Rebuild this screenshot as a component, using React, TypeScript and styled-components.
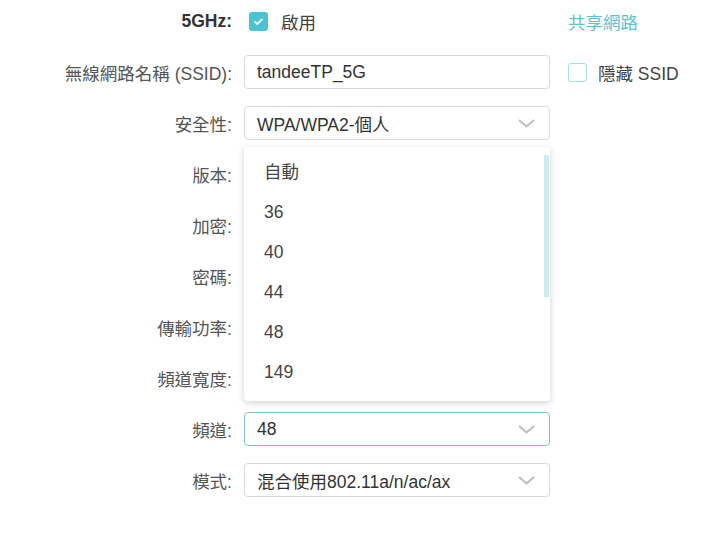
import React from "react";
import styled, { createGlobalStyle } from "styled-components";

const Global = createGlobalStyle`
  html, body { margin: 0; padding: 0; background: #fff; }
  body { font-family: "Liberation Sans", "Noto Sans CJK TC", sans-serif; font-size: 17.5px; color: #333; }
`;

const Page = styled.div`
  position: relative;
  display: flex;
  flex-direction: column;
  gap: 17px;
  padding-top: 4px;
  width: 724px;
  height: 529px;
`;

const Row = styled.div`
  display: flex;
  align-items: center;
  height: 34px;
  gap: 12px;
`;

const Label = styled.div<{ $bold?: boolean }>`
  width: 232px;
  text-align: right;
  color: ${(p) => (p.$bold ? "#333" : "#555")};
  font-weight: ${(p) => (p.$bold ? 700 : 400)};
  white-space: nowrap;
`;

const Field = styled.div`
  position: relative;
  width: 306px;
  height: 34px;
  display: flex;
  align-items: center;
`;

const Box = styled.div<{ $focus?: boolean }>`
  box-sizing: border-box;
  width: 100%;
  height: 100%;
  border: 1px solid ${(p) => (p.$focus ? "#80c6cd" : "#d9d9d9")};
  border-radius: 4px;
  display: flex;
  align-items: center;
  padding: 0 14px 0 12px;
  color: #333;
  background: #fff;
`;

const BoxText = styled.span`
  flex: 1;
`;

const Extra = styled.div`
  margin-left: 6px;
  display: flex;
  align-items: center;
  gap: 11px;
  color: #444;
`;

const Link = styled.span`
  color: #5cc6d0;
  align-self: flex-start;
  margin-top: 1px;
`;

const Check = styled.span<{ $on?: boolean }>`
  box-sizing: border-box;
  width: 19px;
  height: 19px;
  border-radius: 3px;
  border: ${(p) => (p.$on ? "none" : "1.5px solid #a8dde2")};
  background: ${(p) => (p.$on ? "#4ac4d0" : "#fff")};
  display: inline-flex;
  align-items: center;
  justify-content: center;
`;

const CheckLine = styled.label`
  display: flex;
  align-items: center;
  gap: 13px;
  margin-left: 5px;
  color: #444;
`;

const Menu = styled.div`
  position: absolute;
  left: 244px;
  top: 147px;
  width: 306px;
  height: 254px;
  box-sizing: border-box;
  background: #fff;
  border-radius: 4px;
  box-shadow: 0 2px 7px rgba(0, 0, 0, 0.18);
  padding: 5px 0;
  overflow: hidden;
`;

const Thumb = styled.div`
  position: absolute;
  right: 1px;
  top: 8px;
  width: 5px;
  height: 142px;
  background: #c9eef1;
`;

const Item = styled.div`
  height: 40px;
  line-height: 40px;
  padding-left: 20px;
  color: #444;
`;

const Chevron = () => (
  <svg width="17" height="9" viewBox="0 0 17 9">
    <path d="M1 1 L8.5 7.5 L16 1" fill="none" stroke="#bdbdbd" strokeWidth="2" />
  </svg>
);

const Tick = () => (
  <svg width="11" height="9" viewBox="0 0 11 9">
    <path d="M1.5 4.5 L4.3 7 L9.5 1.8" fill="none" stroke="#fff" strokeWidth="1.8" />
  </svg>
);

const Select = ({ value, focus }: { value: string; focus?: boolean }) => (
  <Box $focus={focus}>
    <BoxText>{value}</BoxText>
    <Chevron />
  </Box>
);

const items = ["自動", "36", "40", "44", "48", "149"];

export default function App() {
  return (
    <>
      <Global />
      <Page>
        <Row>
          <Label $bold>5GHz:</Label>
          <Field>
            <CheckLine>
              <Check $on>
                <Tick />
              </Check>
              啟用
            </CheckLine>
          </Field>
          <Extra>
            <Link>共享網路</Link>
          </Extra>
        </Row>
        <Row>
          <Label>無線網路名稱 (SSID):</Label>
          <Field>
            <Box>
              <BoxText>tandeeTP_5G</BoxText>
            </Box>
          </Field>
          <Extra>
            <Check />
            隱藏 SSID
          </Extra>
        </Row>
        <Row>
          <Label>安全性:</Label>
          <Field>
            <Select value="WPA/WPA2-個人" />
          </Field>
        </Row>
        <Row>
          <Label>版本:</Label>
          <Field />
        </Row>
        <Row>
          <Label>加密:</Label>
          <Field />
        </Row>
        <Row>
          <Label>密碼:</Label>
          <Field />
        </Row>
        <Row>
          <Label>傳輸功率:</Label>
          <Field />
        </Row>
        <Row>
          <Label>頻道寬度:</Label>
          <Field />
        </Row>
        <Row>
          <Label>頻道:</Label>
          <Field>
            <Select value="48" focus />
          </Field>
        </Row>
        <Row>
          <Label>模式:</Label>
          <Field>
            <Select value="混合使用802.11a/n/ac/ax" />
          </Field>
        </Row>
        <Menu>
          <Thumb />
          {items.map((i) => (
            <Item key={i}>{i}</Item>
          ))}
        </Menu>
      </Page>
    </>
  );
}
